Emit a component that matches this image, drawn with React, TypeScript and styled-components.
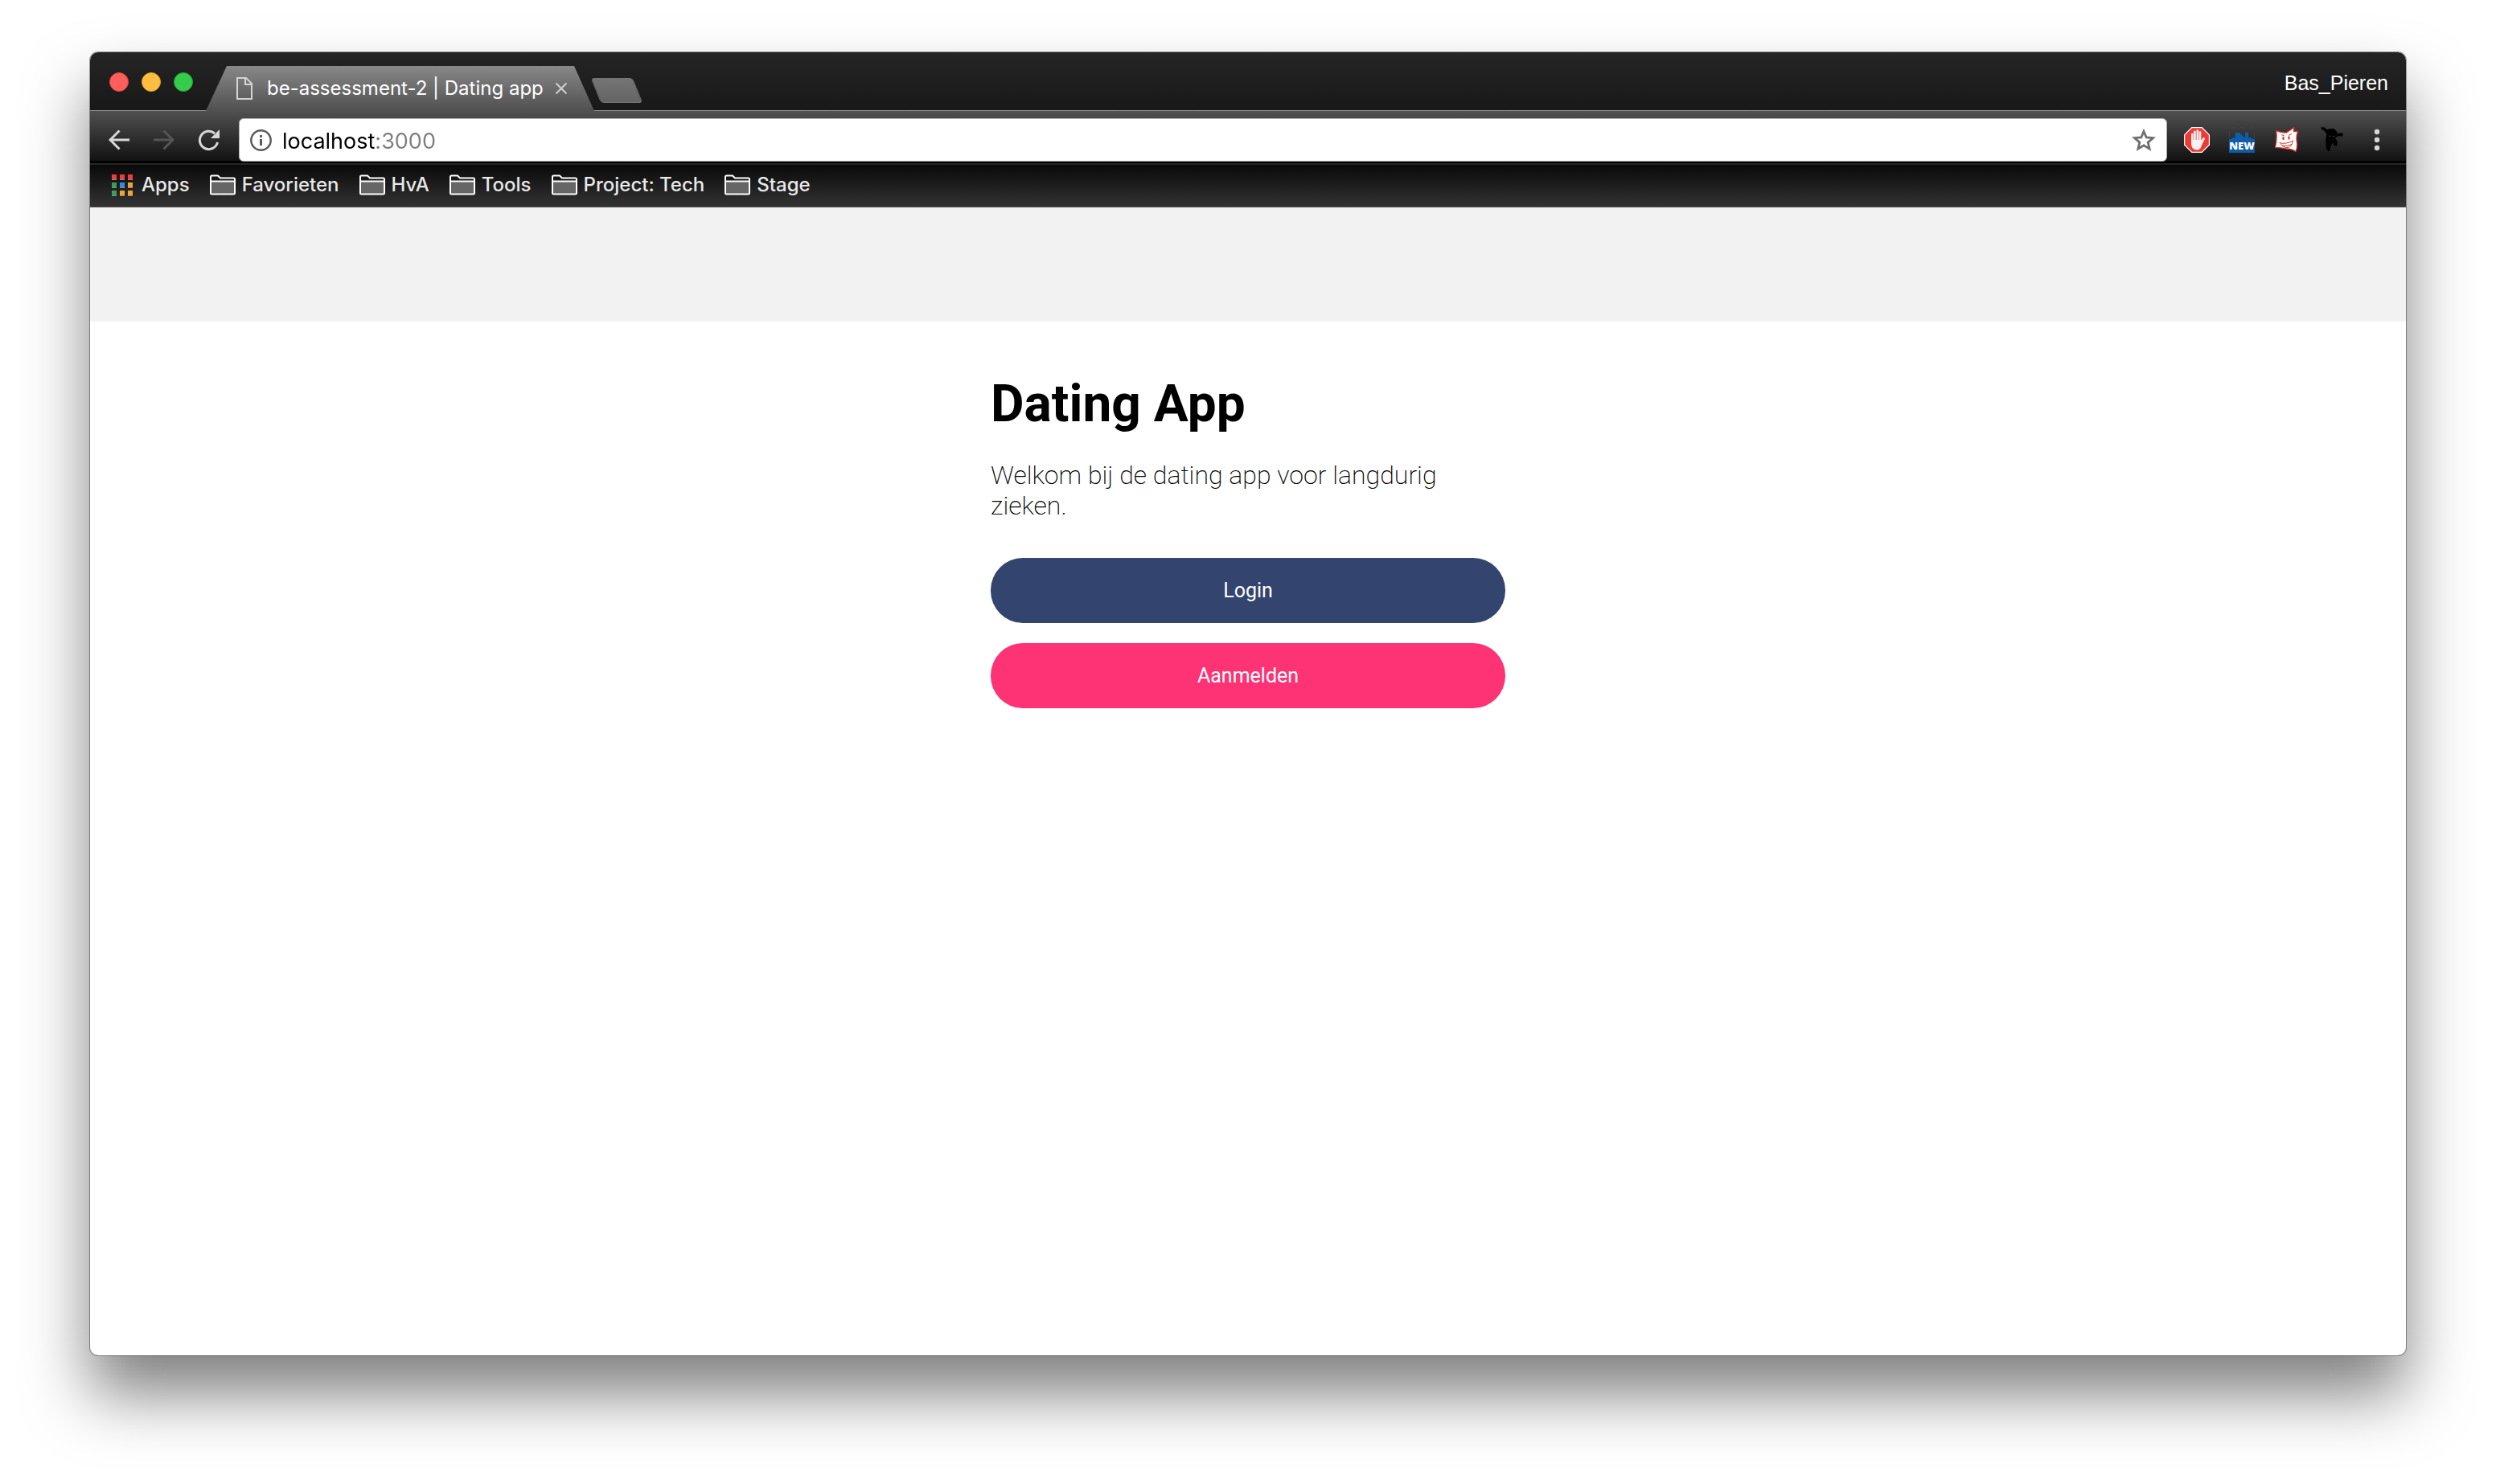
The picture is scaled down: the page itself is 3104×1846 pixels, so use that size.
import React from 'react';
import styled, { createGlobalStyle } from 'styled-components';

const GlobalStyle = createGlobalStyle`
  *, *::before, *::after { box-sizing: border-box; }
  body {
    margin: 0;
    background: #fff;
    font-family: Inter, "Liberation Sans", sans-serif;
  }
  button, input { font: inherit; }
  h1, p, ul { margin: 0; padding: 0; }
`;

const Desktop = styled.div`
  min-height: 100vh;
  display: flex;
  padding: 65px 112px 160px;
`;

const BrowserWindow = styled.div`
  flex: 1;
  min-width: 0;
  display: flex;
  flex-direction: column;
  border-radius: 10px;
  overflow: hidden;
  background: #fff;
  box-shadow: 0 0 0 1px rgba(0, 0, 0, 0.35), 0 48px 80px rgba(0, 0, 0, 0.5);
`;

const TitleBar = styled.div`
  height: 73px;
  display: flex;
  align-items: flex-end;
  padding: 0 22px 0 24px;
  background: linear-gradient(#252525, #181818);
  box-shadow: inset 0 -1px #8c8c8c;
`;

const WindowControls = styled.div`
  align-self: center;
  display: flex;
  gap: 16px;
  width: 120px;
`;

const ControlDot = styled.button<{ $fill: string; $edge: string }>`
  width: 24px;
  height: 24px;
  padding: 0;
  border: 1px solid ${(p) => p.$edge};
  border-radius: 50%;
  background: ${(p) => p.$fill};
`;

const Tab = styled.div`
  width: 483px;
  height: 56px;
  display: flex;
  align-items: center;
  padding: 0 34px 0 38px;
  background: linear-gradient(#888, #505050);
  clip-path: polygon(26px 0, calc(100% - 25px) 0, 100% 100%, 0 100%);
  color: #fff;
  font-size: 24px;
  line-height: 32px;
  font-weight: 400;
`;

const TabTitle = styled.span`
  flex: 1;
  margin-left: 18px;
  white-space: nowrap;
`;

const IconButton = styled.button`
  display: flex;
  align-items: center;
  justify-content: center;
  padding: 0;
  border: 0;
  background: none;
  color: #d8d8d8;

  &:disabled { color: #555; }
`;

const NewTab = styled.button`
  width: 52px;
  height: 31px;
  margin: 0 0 10px 2px;
  padding: 0;
  border: 1px solid #747474;
  border-radius: 4px;
  background: linear-gradient(#757575, #646464);
  transform: skewX(22deg);
`;

const Profile = styled.span`
  align-self: center;
  margin-left: auto;
  padding-top: 2px;
  color: #fff;
  font: 25px/32px "Liberation Sans", Arial, sans-serif;
`;

const Toolbar = styled.div`
  height: 65px;
  display: flex;
  align-items: center;
  padding: 7px 32px 0 22px;
  background: linear-gradient(#505050, #141414 60px, #141414 62px, #000 62px);
`;

const NavButtons = styled.div`
  display: flex;
  gap: 28px;
  width: 163px;

  button { width: 28px; }
`;

const AddressBar = styled.form`
  flex: 1;
  height: 54px;
  display: flex;
  align-items: center;
  padding: 0 13px;
  border: 1px solid #a9adad;
  border-radius: 6px;
  background: #fff;
`;

const AddressInput = styled.input`
  flex: 1;
  min-width: 0;
  height: 40px;
  margin-left: 13px;
  padding: 2px 0 0;
  border: 0;
  outline: 0;
  font-size: 27px;
  line-height: 38px;
  color: transparent;
  background: linear-gradient(90deg, #000 117px, #7f7f7f 117px);
  background-clip: text;
  -webkit-background-clip: text;
`;

const Extensions = styled.div`
  display: flex;
  align-items: center;
  gap: 24px;
  margin-left: 21px;
`;

const MenuSlot = styled.div`
  margin-left: 36px;
`;

const Bookmarks = styled.nav`
  height: 55px;
  padding: 0 27px 2px;
  border-top: 2px solid #262626;
  border-bottom: 1px solid #4a4a4a;
  background: linear-gradient(#090909, #333);
`;

const BookmarkList = styled.ul`
  height: 100%;
  display: flex;
  align-items: center;
  gap: 25px;
  list-style: none;
`;

const Bookmark = styled.a<{ $gap: number }>`
  display: flex;
  align-items: center;
  gap: ${(p) => p.$gap}px;
  color: #e8e8e8;
  font-size: 24px;
  line-height: 32px;
  font-weight: 500;
  text-decoration: none;
  white-space: nowrap;
`;

const Page = styled.div`
  flex: 1;
  font-family: Roboto, "Liberation Sans", sans-serif;
`;

const PageHeader = styled.header`
  height: 142px;
  background: #f2f2f2;
`;

const Content = styled.main`
  width: 640px;
  max-width: 100%;
  margin: 0 auto;
  padding-top: 65px;
  color: #000;
`;

const Title = styled.h1`
  font-size: 64px;
  line-height: 76px;
  font-weight: 700;
`;

const Intro = styled.p`
  margin: 31px 0 46px;
  font-size: 32px;
  line-height: 38px;
  font-weight: 200;
`;

const Actions = styled.div`
  display: flex;
  flex-direction: column;
  gap: 25px;
`;

const ActionLink = styled.a<{ $color: string }>`
  display: flex;
  align-items: center;
  justify-content: center;
  height: 81px;
  border-radius: 40px;
  background: ${(p) => p.$color};
  color: #fff;
  font-size: 25px;
  line-height: 32px;
  font-weight: 400;
  text-decoration: none;
`;

const FileIcon = () => (
  <svg width="20" height="28" viewBox="0 0 20 28" fill="none" stroke="#d4d4d4" strokeWidth="2">
    <path d="M1 1h11l7 7v19H1z" />
    <path d="M11 1v8h8" />
  </svg>
);

const CloseIcon = () => (
  <svg width="14" height="14" viewBox="0 0 14 14" stroke="#d0d0d0" strokeWidth="2">
    <path d="M.5.5l13 13M13.5.5l-13 13" />
  </svg>
);

const BackIcon = () => (
  <svg width="26" height="26" viewBox="0 0 26 26" fill="none" stroke="currentColor" strokeWidth="3">
    <path d="M26 13H2M13.500 1.500L2 13l11.500 11.500" />
  </svg>
);

const ForwardIcon = () => (
  <svg width="26" height="26" viewBox="0 0 26 26" fill="none" stroke="currentColor" strokeWidth="3">
    <path d="M0 13h24M12.500 1.500L24 13 12.500 24.500" />
  </svg>
);

const ReloadIcon = () => (
  <svg width="28" height="28" viewBox="0 0 28 28">
    <path d="M24.500 17A11.200 11.200 0 1 1 21 6" fill="none" stroke="currentColor" strokeWidth="3" />
    <path d="M27 1v11H16z" fill="currentColor" />
  </svg>
);

const InfoIcon = () => (
  <svg width="27" height="27" viewBox="0 0 27 27">
    <circle cx="13.500" cy="13.500" r="12.200" fill="none" stroke="#5c5c5c" strokeWidth="2.500" />
    <path d="M12 7h3v3h-3zM12 12h3v8h-3z" fill="#5c5c5c" />
  </svg>
);

const StarIcon = () => (
  <svg width="30" height="28" viewBox="0 0 30 28">
    <path
      d="M15 3.500l3.200 7.500 8.300.7-6.300 5.400 1.900 8-7.100-4.200-7.100 4.200 1.900-8-6.300-5.400 8.300-.7z"
      fill="none"
      stroke="#6e6e6e"
      strokeWidth="2.800"
    />
  </svg>
);

const AdBlockIcon = () => (
  <svg width="32" height="32" viewBox="0 0 32 32">
    <path d="M9.500 0h13L32 9.500v13L22.500 32h-13L0 22.500v-13z" fill="#fff" />
    <path d="M10 1.200h12L30.800 10v12L22 30.800H10L1.200 22V10z" fill="#ee3a33" />
    <g fill="none" stroke="#f6f2f2" strokeLinecap="round">
      <path d="M10.300 9v10M13.400 5.800V18M16.800 4.500V18M20 6.500V18" strokeWidth="2.600" />
      <path d="M20.500 22l4-7.500" strokeWidth="2.800" />
    </g>
    <path d="M9 16h12.300l2 3-2.300 6.500Q19.500 28.500 16 28.500q-6 0-7-7z" fill="#f6f2f2" />
  </svg>
);

const NewIcon = () => (
  <svg width="32" height="32" viewBox="0 0 32 32">
    <path d="M.5 13V3q0-2 2-2h27q2 0 2 2v10" fill="none" stroke="#424242" strokeDasharray="8 4" />
    <path d="M0 15h2l3-2h3V7h5l7 7V7h4v6h3l3 2h2v17H0z" fill="#0f5ca8" />
    <text x="16" y="28" textAnchor="middle" fill="#fff" fontFamily="Open Sans, sans-serif" fontSize="13" fontWeight="800">
      NEW
    </text>
  </svg>
);

const GrinIcon = () => (
  <svg width="32" height="32" viewBox="0 0 32 32">
    <path
      d="M2.700 4.700Q9 7.500 15.300 7L24.700.8 24.500 5.500l5 0Q27 12 28.500 20q.5 6-1.500 10.500Q22 27 15.300 27 8 25.500 1.500 25.300 4 15 2.700 4.700z"
      fill="#fff"
      stroke="#d4372c"
      strokeWidth="1.300"
    />
    <path
      d="M9 9.500l4 1.500M18 10.500l4-2M6.500 19.500Q14 22 24 17M8 20.500Q11 26 17 25.500 22.500 24.500 23 18M10 23q6 1.500 12-1.500"
      fill="none"
      stroke="#d4372c"
      strokeWidth="1"
    />
    <ellipse cx="11.500" cy="14" rx="1.200" ry="2.200" fill="#d4372c" />
    <ellipse cx="18.500" cy="13.500" rx="1.200" ry="2.200" fill="#d4372c" />
  </svg>
);

const NinjaIcon = () => (
  <svg width="32" height="32" viewBox="0 0 32 32">
    <path
      d="M2.700.3L6 .3l4.300 2.900 2-1 6-.2 3.700 3.500v2l4 .5 1.500-1.300L30 9l-1.500 2.700-4.800-.5-3.700 2.500 3 5-1 5-3.700-.7-1.300-3.700-2.700 5-1 6-2.300-.6-2.300-3.400L8.300 17l1-8.300L6 4.300 2.700 3z"
      fill="#000"
    />
    <path d="M12.500 11l2 .8M17 11.800l2-.6" stroke="#4a4a4a" />
  </svg>
);

const MenuIcon = () => (
  <svg width="8" height="28" viewBox="0 0 8 28" fill="#d8d8d8">
    <circle cx="4" cy="4" r="3.200" />
    <circle cx="4" cy="14" r="3.200" />
    <circle cx="4" cy="24" r="3.200" />
  </svg>
);

const appColors = ['#f23a3a', '#f23a3a', '#f23a3a', '#3a9f57', '#2b8cf5', '#f2a32b', '#3a9f57', '#f2a32b', '#f2a32b'];

const AppsIcon = () => (
  <svg width="27" height="27" viewBox="0 0 27 27">
    {appColors.map((color, i) => (
      <g key={i} transform={`translate(${(i % 3) * 10} ${Math.floor(i / 3) * 10})`}>
        <rect width="6" height="7" fill="#888" />
        <rect width="6" height="6" fill={color} />
      </g>
    ))}
  </svg>
);

const FolderIcon = () => (
  <svg width="32" height="26" viewBox="0 0 32 26">
    <rect x="1" y="9" width="30" height="15" fill="#666" />
    <path d="M1 23V3q0-1.500 1.500-1.500H10l3 3h16.500Q31 4.500 31 6v17q0 1.500-1.500 1.500h-27Q1 24.500 1 23zM1 8.500h30" fill="none" stroke="#fff" strokeWidth="2" />
  </svg>
);

const folders = ['Favorieten', 'HvA', 'Tools', 'Project: Tech', 'Stage'];

export default function App() {
  return (
    <>
      <GlobalStyle />
      <Desktop>
        <BrowserWindow>
          <TitleBar>
            <WindowControls>
              <ControlDot aria-label="Close window" $fill="#ff5f5c" $edge="#e2463f" />
              <ControlDot aria-label="Minimize window" $fill="#ffbe40" $edge="#e0a033" />
              <ControlDot aria-label="Zoom window" $fill="#35cb4b" $edge="#1faa32" />
            </WindowControls>
            <Tab>
              <FileIcon />
              <TabTitle>be-assessment-2 | Dating app</TabTitle>
              <IconButton aria-label="Close tab"><CloseIcon /></IconButton>
            </Tab>
            <NewTab aria-label="New tab" />
            <Profile>Bas_Pieren</Profile>
          </TitleBar>
          <Toolbar>
            <NavButtons>
              <IconButton aria-label="Back"><BackIcon /></IconButton>
              <IconButton aria-label="Forward" disabled><ForwardIcon /></IconButton>
              <IconButton aria-label="Reload"><ReloadIcon /></IconButton>
            </NavButtons>
            <AddressBar onSubmit={(e) => e.preventDefault()}>
              <InfoIcon />
              <AddressInput type="text" aria-label="Address" defaultValue="localhost:3000" />
              <IconButton type="button" aria-label="Bookmark this page"><StarIcon /></IconButton>
            </AddressBar>
            <Extensions>
              <IconButton aria-label="Ad blocker"><AdBlockIcon /></IconButton>
              <IconButton aria-label="News"><NewIcon /></IconButton>
              <IconButton aria-label="Grin"><GrinIcon /></IconButton>
              <IconButton aria-label="Ninja"><NinjaIcon /></IconButton>
            </Extensions>
            <MenuSlot>
              <IconButton aria-label="Menu"><MenuIcon /></IconButton>
            </MenuSlot>
          </Toolbar>
          <Bookmarks aria-label="Bookmarks">
            <BookmarkList>
              <li><Bookmark href="#apps" $gap={10}><AppsIcon />Apps</Bookmark></li>
              {folders.map((name) => (
                <li key={name}><Bookmark href="#" $gap={8}><FolderIcon />{name}</Bookmark></li>
              ))}
            </BookmarkList>
          </Bookmarks>
          <Page>
            <PageHeader />
            <Content>
              <Title>Dating App</Title>
              <Intro>Welkom bij de dating app voor langdurig zieken.</Intro>
              <Actions>
                <ActionLink href="#login" $color="#33446f">Login</ActionLink>
                <ActionLink href="#aanmelden" $color="#fe3376">Aanmelden</ActionLink>
              </Actions>
            </Content>
          </Page>
        </BrowserWindow>
      </Desktop>
    </>
  );
}
